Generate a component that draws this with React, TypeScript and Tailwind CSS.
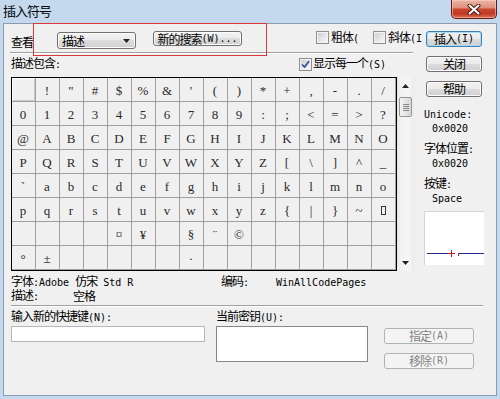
import type { ReactNode } from "react";

const rows: string[][] = [
  " !\"#$%&'()*+,-./".split(""),
  "0123456789:;<=>?".split(""),
  "@ABCDEFGHIJKLMNO".split(""),
  "PQRSTUVWXYZ[\\]^_".split(""),
  "`abcdefghijklmno".split(""),
  [..."pqrstuvwxyz{|}~".split(""), "notdef"],
  ["", "", "", "", "¤", "¥", "", "§", "¨", "©", "", "", "", "", "", ""],
  ["°", "±", "", "", "", "", "", "·", "", "", "", "", "", "", "", ""],
];

// SimSun-like: CJK at 12px (tight), latin as half-width mono
function T({ s }: { s: string }) {
  const parts = s.match(/[ -~]+|[^ -~]+/g) ?? [];
  return (
    <>
      {parts.map((part, i) =>
        /^[ -~]/.test(part) ? (
          <span
            key={i}
            className="inline-block whitespace-pre font-['DejaVu_Sans_Mono',monospace] text-[10px]"
          >
            {part}
          </span>
        ) : (
          <span key={i} className="inline-block tracking-[-1px]">
            {part}
          </span>
        )
      )}
    </>
  );
}

function Button({
  label,
  focused,
  disabled,
  className,
}: {
  label: string;
  focused?: boolean;
  disabled?: boolean;
  className: string;
}) {
  const look = disabled
    ? "border-[#adb2b5] bg-[#f4f4f4] text-[#838383]"
    : focused
      ? "border-[#3c7fb1] bg-[linear-gradient(#f2f2f2_0%,#ebebeb_50%,#dddddd_50%,#cfcfcf_100%)] shadow-[inset_0_0_0_1px_#a8dcf6]"
      : "border-[#707070] bg-[linear-gradient(#f2f2f2_0%,#ebebeb_50%,#dddddd_50%,#cfcfcf_100%)] shadow-[inset_0_0_0_1px_#fcfcfc]";
  return (
    <button
      type="button"
      className={`flex items-center justify-center rounded-[3px] border leading-[12px] ${look} ${className}`}
    >
      <T s={label} />
    </button>
  );
}

function CheckBox({ checked }: { checked?: boolean }) {
  return (
    <span className="flex h-[13px] w-[13px] shrink-0 items-center justify-center border border-[#8e8f8f] bg-[#f4f4f4]">
      <span className="flex h-[9px] w-[9px] items-center justify-center bg-[linear-gradient(135deg,#cdd0d4,#f7f7f7)]">
        {checked && (
          <svg width="9" height="9" viewBox="0 0 9 9">
            <path
              d="M1 4.5 L3.6 7 L8 1.2"
              fill="none"
              stroke="#2d4f8e"
              strokeWidth="1.7"
            />
          </svg>
        )}
      </span>
    </span>
  );
}

function Arrow({ down }: { down?: boolean }) {
  return (
    <svg width="7" height="4" viewBox="0 0 7 4">
      <polygon points={down ? "0,0 7,0 3.5,4" : "0,4 7,4 3.5,0"} fill="#222" />
    </svg>
  );
}

function Cell({ ch, first }: { ch: string; first: boolean }) {
  let content: ReactNode = ch;
  if (ch === "notdef") {
    content = <span className="inline-block h-[9px] w-[5px] border border-[#333]" />;
  }
  return (
    <div
      className={
        first
          ? "flex h-[24px] w-[24px] items-center justify-center border-b border-r border-[#a0a0a0] pr-px pt-[2px] shadow-[inset_1px_1px_0_#ffffff,inset_-1px_-1px_0_#c8c8c8]"
          : "flex h-[24px] w-[24px] items-center justify-center border-b border-r border-[#a0a0a0] pr-px pt-[2px]"
      }
    >
      {content}
    </div>
  );
}

export default function App() {
  return (
    <div className="relative flex h-[399px] w-[500px] flex-col overflow-hidden bg-[#c4d8ee] font-['Noto_Sans_CJK_SC',sans-serif] text-[12px] text-black">
      <div className="flex h-[23px] shrink-0 items-start justify-between">
        <span className="pl-[3px] pt-[3px] text-[13px] leading-[15px] tracking-[-1px]">插入符号</span>
        <button
          type="button"
          className="mr-[3px] flex h-[19px] w-[46px] items-center justify-center rounded-b-[5px] border border-t-0 border-[#5f1d12] bg-[linear-gradient(#ecb4a5_0%,#df917e_42%,#c9452f_52%,#c23a24_75%,#da6a4f_100%)] shadow-[inset_0_0_0_1px_rgba(255,214,200,0.55)]"
        >
          <svg width="14" height="11" viewBox="0 0 14 11">
            <path d="M2.5 1.5 L11.5 9.5 M11.5 1.5 L2.5 9.5" stroke="#4a1a12" strokeWidth="4" strokeLinecap="round" />
            <path d="M2.5 1.5 L11.5 9.5 M11.5 1.5 L2.5 9.5" stroke="#ffffff" strokeWidth="2" strokeLinecap="round" />
          </svg>
        </button>
      </div>

      <div className="mx-[3px] h-[373px] border border-[#8a9bb0] bg-[#f0f0f0] pl-[7px] pt-[7px]">
        <div className="flex">
          {/* left column */}
          <div className="w-[413px]">
            <div className="flex h-[19px] items-start">
              <span className="mt-[5px] w-[46px] leading-[12px]">
                <T s="查看" />
              </span>
              <div className="mt-px flex h-[17px] w-[79px] items-center justify-between rounded-[3px] border border-[#707070] bg-[linear-gradient(#f2f2f2_0%,#ebebeb_50%,#dddddd_50%,#cfcfcf_100%)] pl-[4px] pr-[5px] leading-[12px] shadow-[inset_0_0_0_1px_#fcfcfc]">
                <span>
                  <T s="描述" />
                </span>
                <Arrow down />
              </div>
              <Button label="新的搜索(W)..." className="ml-[17px] h-[15px] w-[89px]" />
              <label className="ml-[74px] flex w-[57px] items-start gap-[2px]">
                <CheckBox />
                <span className="whitespace-nowrap leading-[12px]">
                  <T s="粗体(" />
                </span>
              </label>
              <label className="flex items-start gap-[2px]">
                <CheckBox />
                <span className="whitespace-nowrap leading-[12px]">
                  <T s="斜体(I" />
                </span>
              </label>
            </div>

            <div className="-ml-px mt-[2px] h-[2px] w-[403px] border-y border-t-[#a0a0a0] border-b-white" />

            <div className="mt-[3px] flex h-[14px] items-center">
              <span className="w-[288px] leading-[14px]">
                <T s="描述包含:" />
              </span>
              <CheckBox checked />
              <span className="ml-px leading-[14px]">
                <T s="显示每一个(S)" />
              </span>
            </div>

            <div className="mt-[6px] flex">
              <div className="grid h-[194px] w-[386px] grid-cols-[repeat(16,24px)] border border-black font-['Liberation_Serif',serif] text-[13px] leading-none text-[#2a2a2a]">
                {rows.map((row, r) =>
                  row.map((ch, c) => (
                    <Cell key={`${r}-${c}`} ch={ch} first={r === 0 && c === 0} />
                  ))
                )}
              </div>
              <div className="flex h-[194px] w-[17px] flex-col bg-[linear-gradient(90deg,#e6e6e6,#f3f3f3_25%,#f5f5f5_75%,#ebebeb)]">
                <div className="flex h-[17px] items-center justify-center">
                  <Arrow />
                </div>
                <div className="ml-[2px] mt-[3px] flex h-[20px] w-[13px] flex-col items-center justify-center gap-px rounded-[2px] border border-[#979797] bg-[linear-gradient(90deg,#f4f4f4,#e6e6e6_50%,#d6d6d6)]">
                  <span className="h-px w-[6px] bg-[#8a8a8a]" />
                  <span className="h-px w-[6px] bg-[#8a8a8a]" />
                  <span className="h-px w-[6px] bg-[#8a8a8a]" />
                  <span className="h-px w-[6px] bg-[#8a8a8a]" />
                </div>
                <div className="flex-1" />
                <div className="flex h-[17px] items-center justify-center">
                  <Arrow down />
                </div>
              </div>
            </div>
          </div>

          {/* right column */}
          <div className="w-[60px]">
            <Button label="插入(I)" focused className="ml-[2px] h-[16px] w-[56px]" />
            <Button label="关闭" className="ml-[2px] mt-[9px] h-[16px] w-[56px]" />
            <Button label="帮助" className="ml-[2px] mt-[9px] h-[16px] w-[56px]" />
            <div className="mt-[9px] h-[14px] leading-[14px]">
              <T s="Unicode:" />
            </div>
            <div className="h-[14px] pl-[8px] leading-[14px]">
              <T s="0x0020" />
            </div>
            <div className="mt-[7px] h-[14px] leading-[14px]">
              <T s="字体位置:" />
            </div>
            <div className="h-[14px] pl-[8px] leading-[14px]">
              <T s="0x0020" />
            </div>
            <div className="mt-[7px] h-[14px] leading-[14px]">
              <T s="按键:" />
            </div>
            <div className="h-[14px] pl-[8px] leading-[14px]">
              <T s="Space" />
            </div>
            <div className="mt-[7px] h-[54px] w-[60px] border-l border-t border-[#d4d4d4] bg-white">
              <svg width="59" height="53" viewBox="0 0 59 53">
                <path d="M2 41.5 H24 M34 41.5 H59" stroke="#1f2a8c" strokeWidth="1" />
                <path d="M23 41.5 H30 M26.5 38 V45" stroke="#d01818" strokeWidth="1" />
                <path d="M33.5 41 V44" stroke="#d01818" strokeWidth="1" />
              </svg>
            </div>
          </div>
        </div>

        {/* bottom section */}
        <div className="mt-[4px] flex h-[14px] items-center leading-[14px]">
          <span className="w-[210px]">
            <T s="字体:Adobe 仿宋 Std R" />
          </span>
          <span className="w-[55px]">
            <T s="编码:" />
          </span>
          <span>
            <T s="WinAllCodePages" />
          </span>
        </div>
        <div className="flex h-[14px] items-center leading-[14px]">
          <span className="w-[62px]">
            <T s="描述:" />
          </span>
          <span>
            <T s="空格" />
          </span>
        </div>
        <div className="mt-[2px] h-[2px] w-[472px] border-y border-t-[#a0a0a0] border-b-white" />
        <div className="mt-[3px] flex h-[14px] items-center leading-[14px]">
          <span className="w-[205px]">
            <T s="输入新的快捷键(N):" />
          </span>
          <span>
            <T s="当前密钥(U):" />
          </span>
        </div>
        <div className="mt-[2px] flex items-start">
          <div className="h-[16px] w-[194px] border border-[#b4b7bd] bg-white" />
          <div className="ml-[11px] h-[36px] w-[152px] border border-[#828790] bg-white" />
          <div className="ml-[16px] flex flex-col">
            <Button label="指定(A)" disabled className="mt-[2px] h-[16px] w-[90px]" />
            <Button label="移除(R)" disabled className="mt-[9px] h-[16px] w-[90px]" />
          </div>
        </div>
      </div>

      {/* red annotation box drawn over the dialog */}
      <div className="pointer-events-none absolute left-[33px] top-[23px] h-[33px] w-[234px] border border-[#d9393c]" />
    </div>
  );
}
